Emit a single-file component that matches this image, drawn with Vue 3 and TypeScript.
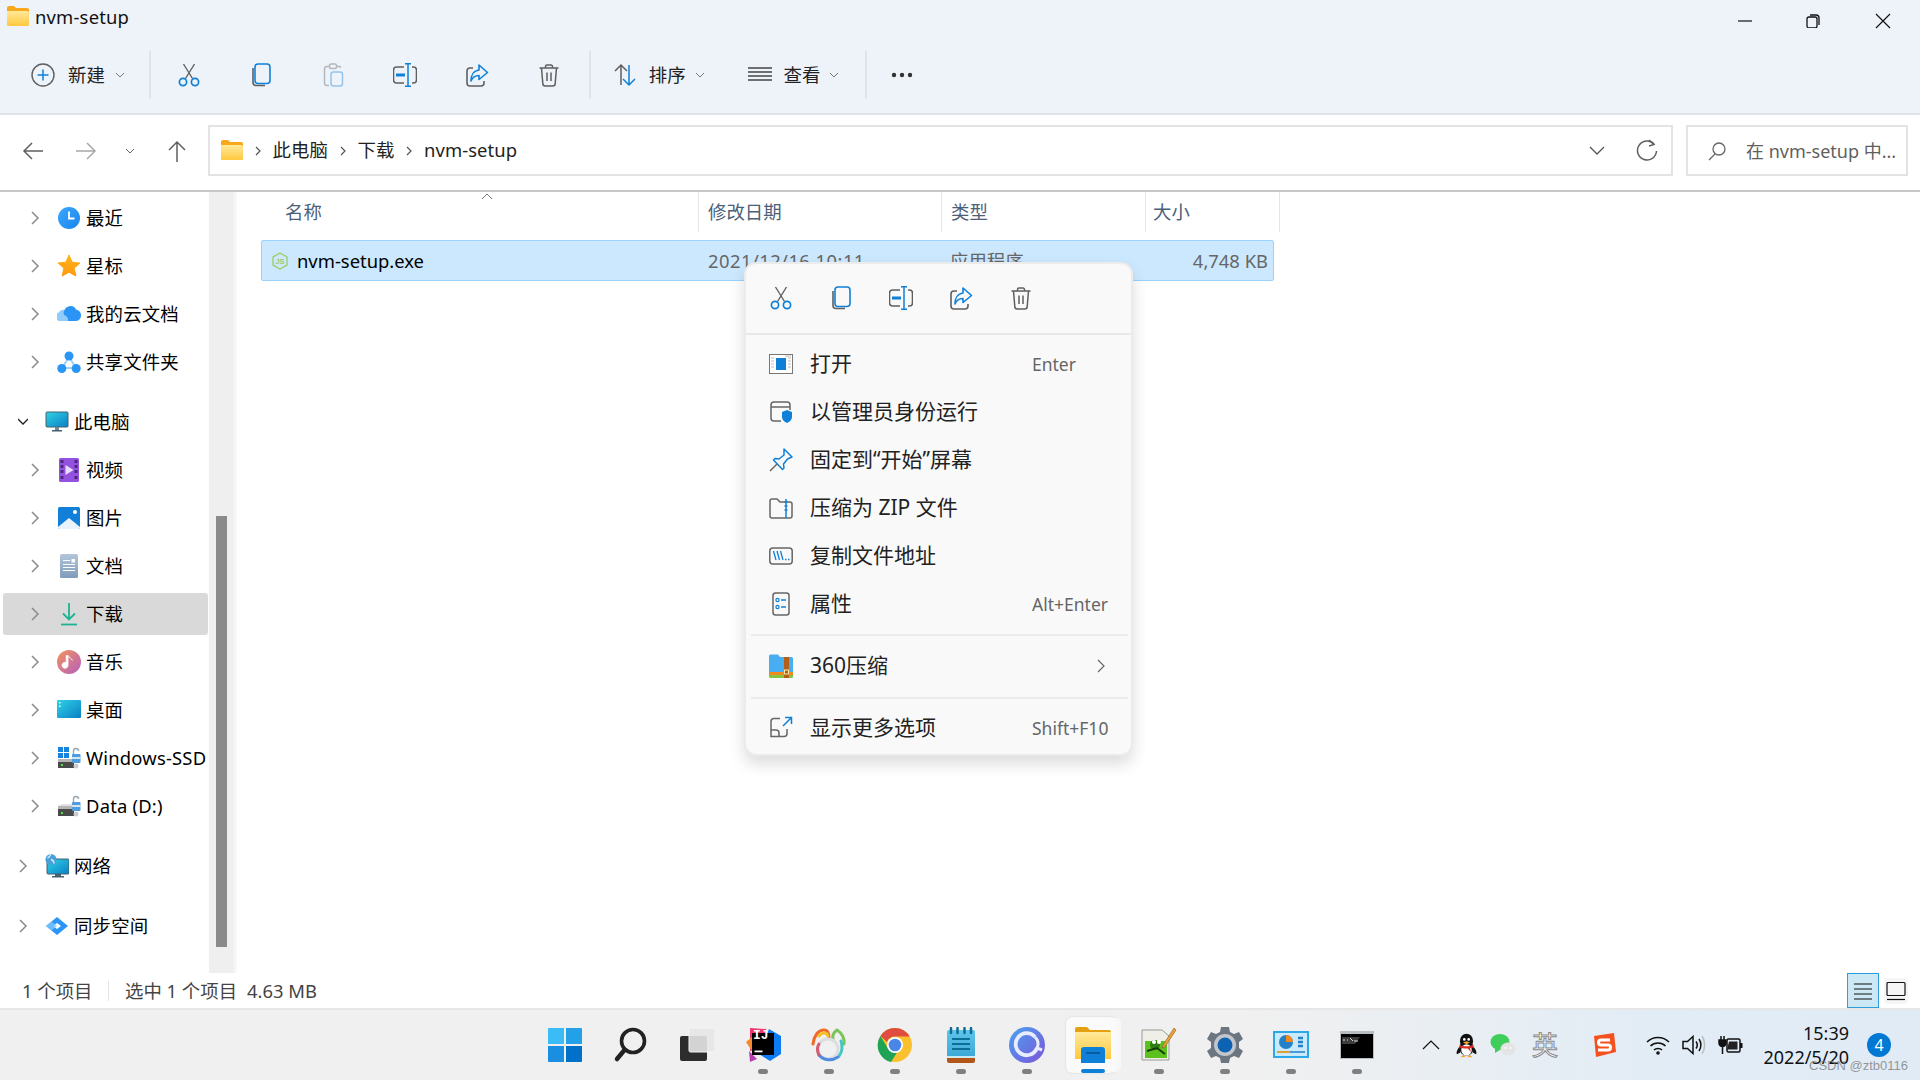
<template>
  <div class="page">
    <!-- shared icons -->
    <svg class="defs" width="0" height="0">
      <defs>
        <linearGradient id="g-folder" x1="0" y1="0" x2="0" y2="1"><stop offset="0" stop-color="#ffe99a" /><stop offset="1" stop-color="#ffc83d" /></linearGradient>
        <linearGradient id="g-blue" x1="0" y1="0" x2="1" y2="1"><stop offset="0" stop-color="#39a8ff" /><stop offset="1" stop-color="#1a84ee" /></linearGradient>
        <linearGradient id="g-star" x1="0" y1="0" x2="0" y2="1"><stop offset="0" stop-color="#ffb31a" /><stop offset="1" stop-color="#ff9a0e" /></linearGradient>
        <linearGradient id="g-screen" x1="0" y1="0" x2="1" y2="1"><stop offset="0" stop-color="#2fd3e6" /><stop offset="1" stop-color="#0b7fc4" /></linearGradient>
        <linearGradient id="g-music" x1="0" y1="0" x2="1" y2="1"><stop offset="0" stop-color="#f4935a" /><stop offset="1" stop-color="#b45fc0" /></linearGradient>
        <linearGradient id="g-doc" x1="0" y1="0" x2="0" y2="1"><stop offset="0" stop-color="#b4c6da" /><stop offset="1" stop-color="#7f9cba" /></linearGradient>
        <linearGradient id="g-purple" x1="0" y1="0" x2="1" y2="1"><stop offset="0" stop-color="#4aa2f0" /><stop offset="1" stop-color="#7c55d8" /></linearGradient>
        <linearGradient id="g-tray" x1="0" y1="0" x2="0" y2="1"><stop offset="0" stop-color="#5fc5ea" /><stop offset="1" stop-color="#3aa6d6" /></linearGradient>
      </defs>

      <symbol id="i-folder" viewBox="0 0 22 20">
        <path d="M0 2a2 2 0 0 1 2-2h5l2 2h11a2 2 0 0 1 2 2v14a2 2 0 0 1-2 2H2a2 2 0 0 1-2-2z" fill="#f7a81b" />
        <path d="M0 5h20a2 2 0 0 1 2 2v11a2 2 0 0 1-2 2H2a2 2 0 0 1-2-2z" fill="url(#g-folder)" />
      </symbol>

      <!-- command icons -->
      <symbol id="i-cut" viewBox="0 0 24 24">
        <path d="M6.500 1l9 14.500M17.500 1l-9 14.500" fill="none" stroke="#5f5f5f" stroke-width="1.400" />
        <circle cx="6" cy="19" r="3.600" fill="none" stroke="#0f80d8" stroke-width="1.700" />
        <circle cx="18" cy="19" r="3.600" fill="none" stroke="#0f80d8" stroke-width="1.700" />
      </symbol>
      <symbol id="i-copy" viewBox="0 0 24 24">
        <path d="M4 5v14.500a3 3 0 0 0 3 3h9" fill="none" stroke="#5f5f5f" stroke-width="1.600" />
        <rect x="6" y="1" width="15" height="19.500" rx="3" fill="none" stroke="#0f80d8" stroke-width="1.600" />
      </symbol>
      <symbol id="i-paste" viewBox="0 0 24 24">
        <g opacity=".4">
          <path d="M9 3.500H6a2.500 2.500 0 0 0-2.500 2.500v14a2.500 2.500 0 0 0 2.500 2.500h2M15 3.500h3a2.500 2.500 0 0 1 2 1" fill="none" stroke="#5f5f5f" stroke-width="1.500" />
          <rect x="8.500" y="1" width="7" height="4.500" rx="1.500" fill="none" stroke="#5f5f5f" stroke-width="1.500" />
          <rect x="10" y="9" width="11.500" height="14" rx="2.500" fill="none" stroke="#0f80d8" stroke-width="1.500" />
        </g>
      </symbol>
      <symbol id="i-rename" viewBox="0 0 24 24">
        <path d="M11 4H3.500a3 3 0 0 0-3 3v10a3 3 0 0 0 3 3H11M19 4h1.500a3 3 0 0 1 3 3v10a3 3 0 0 1-3 3H19" fill="none" stroke="#5f5f5f" stroke-width="1.600" />
        <path d="M15 .5v23M12 .8h6M12 23.200h6" fill="none" stroke="#0f80d8" stroke-width="1.500" />
        <rect x="3" y="10.500" width="9" height="3" fill="#0f80d8" />
      </symbol>
      <symbol id="i-share" viewBox="0 0 24 24">
        <path d="M8 5H5a3 3 0 0 0-3 3v12a3 3 0 0 0 3 3h11a3 3 0 0 0 3-3v-2" fill="none" stroke="#5f5f5f" stroke-width="1.600" />
        <path d="M14 2l8.500 7.500-8.500 7v-4c-3.800 0-6.500 1.800-8 5.500 0-6 3-10.500 8-11z" fill="none" stroke="#0f80d8" stroke-width="1.600" stroke-linejoin="round" />
      </symbol>
      <symbol id="i-delete" viewBox="0 0 24 24">
        <path d="M2.500 5h19M8.500 5V3.500A1.500 1.500 0 0 1 10 2h4a1.500 1.500 0 0 1 1.500 1.500V5M4.500 5l1.300 15.500a2.500 2.500 0 0 0 2.500 2.500h7.400a2.500 2.500 0 0 0 2.500-2.500L19.500 5M10 9.500v8.500M14 9.500v8.500" fill="none" stroke="#5f5f5f" stroke-width="1.500" />
      </symbol>

      <!-- sidebar icons -->
      <symbol id="s-recent" viewBox="0 0 24 24">
        <circle cx="12" cy="12" r="11" fill="url(#g-blue)" />
        <path d="M12 5.500V12.500H17.500" fill="none" stroke="#fff" stroke-width="1.800" />
      </symbol>
      <symbol id="s-star" viewBox="0 0 24 24">
        <path d="M12 1l3.200 7.200 7.800.8-5.800 5.200 1.600 7.800L12 18.200 5.200 22l1.600-7.800L1 9l7.800-.8z" fill="url(#g-star)" stroke="url(#g-star)" stroke-width="1" stroke-linejoin="round" />
      </symbol>
      <symbol id="s-cloud" viewBox="0 0 24 24">
        <path d="M2 19a4.500 4.500 0 0 1-.5-8.500A6 6 0 0 1 9 8.500l5 10.500z" fill="#8fcbfb" />
        <path d="M7 13a7 7 0 0 1 7-9 6 6 0 0 1 5 3.500A5.800 5.800 0 0 1 24 13.500 5.500 5.500 0 0 1 18.500 19H11a5 5 0 0 0-4-6z" fill="#2b95f5" />
      </symbol>
      <symbol id="s-shared" viewBox="0 0 24 24">
        <path d="M12 7L5 18M12 7l7 11M5 18h14" stroke="#9dd0fb" stroke-width="2" fill="none" />
        <circle cx="12" cy="6" r="4.500" fill="#2b95f5" />
        <circle cx="4.800" cy="18.500" r="4.500" fill="#2b95f5" />
        <circle cx="19.200" cy="18.500" r="4.500" fill="#2b95f5" />
      </symbol>
      <symbol id="s-pc" viewBox="0 0 24 24">
        <rect x="1" y="2" width="22" height="15" rx="1" fill="url(#g-screen)" stroke="#45606e" stroke-width="1" />
        <rect x="10" y="17" width="4" height="3" fill="#6f8796" />
        <rect x="7" y="20" width="10" height="1.500" fill="#45606e" />
      </symbol>
      <symbol id="s-video" viewBox="0 0 24 24">
        <rect x="2" y="0" width="20" height="24" rx="1.500" fill="#9551e0" />
        <g fill="#4a2a78"><rect x="3.500" y="2" width="3" height="3" /><rect x="3.500" y="7" width="3" height="3" /><rect x="3.500" y="12" width="3" height="3" /><rect x="3.500" y="18" width="3" height="3" /><rect x="17.500" y="2" width="3" height="3" /><rect x="17.500" y="7" width="3" height="3" /><rect x="17.500" y="12" width="3" height="3" /><rect x="17.500" y="18" width="3" height="3" /></g>
        <path d="M8.500 7l8 5-8 5z" fill="#eadcff" />
      </symbol>
      <symbol id="s-picture" viewBox="0 0 24 24">
        <rect x="1" y="1" width="22" height="22" rx="1.500" fill="#1280d8" />
        <circle cx="18" cy="6" r="2" fill="#fff" />
        <path d="M1 21l11-9 11 9v.5a1.500 1.500 0 0 1-1.500 1.500h-19A1.500 1.500 0 0 1 1 21.500z" fill="#e9f3fb" />
      </symbol>
      <symbol id="s-doc" viewBox="0 0 24 24">
        <rect x="3" y="0" width="18" height="24" rx="1.500" fill="url(#g-doc)" />
        <path d="M6 6.500h7M6 10.500h12M6 13.500h12M6 16.500h12" stroke="#fff" stroke-width="1" />
        <rect x="14.500" y="5" width="3.500" height="3.500" fill="#fff" />
      </symbol>
      <symbol id="s-download" viewBox="0 0 24 24">
        <path d="M12 1v16M6 11.500l6 6 6-6" fill="none" stroke="#1cb394" stroke-width="1.800" />
        <path d="M4 22.500h16" stroke="#1cb394" stroke-width="1.800" />
      </symbol>
      <symbol id="s-music" viewBox="0 0 24 24">
        <circle cx="12" cy="12" r="12" fill="url(#g-music)" />
        <path d="M11 5.500v9.800a3 3 0 1 1-1.800-2.700V5.500zM11 5.500c1 2.500 3.500 2.500 4.500 5" fill="#fff" stroke="#fff" stroke-width=".8" />
      </symbol>
      <symbol id="s-desktop" viewBox="0 0 24 24">
        <rect x="0" y="2" width="24" height="18" rx="1" fill="url(#g-screen)" />
        <rect x="2" y="4" width="1.500" height="1.500" fill="#fff" />
        <rect x="2" y="7.500" width="1.500" height="1.500" fill="#fff" />
      </symbol>
      <symbol id="s-ssd" viewBox="0 0 24 24">
        <g fill="#1884dc"><rect x="1" y="1" width="5" height="5" /><rect x="7" y="1" width="5" height="5" /><rect x="1" y="7" width="5" height="5" /><rect x="7" y="7" width="5" height="5" /></g>
        <path d="M1 14h14l2 0v8H1z" fill="#4a4a4a" />
        <rect x="1" y="13" width="16" height="3" fill="#b5b5b5" />
        <rect x="4" y="18" width="2" height="2" fill="#55e04a" />
        <path d="M16.500 8V5a2.500 2.500 0 0 1 5 0" fill="none" stroke="#9aa5ad" stroke-width="1.400" />
        <rect x="15" y="8" width="8.500" height="9" rx="1" fill="#4d9ee0" />
        <rect x="15" y="11" width="8.500" height="2" fill="#d7e4ee" />
        <circle cx="19" cy="20" r="2.500" fill="#c8ced3" />
      </symbol>
      <symbol id="s-data" viewBox="0 0 24 24">
        <path d="M5 10h12v2H1z" fill="#e2e2e2" />
        <path d="M1 13h16v9H1z" fill="#4a4a4a" />
        <rect x="1" y="12" width="16" height="3" fill="#b5b5b5" />
        <rect x="4" y="18" width="2" height="2" fill="#55e04a" />
        <path d="M16.500 8V5a2.500 2.500 0 0 1 5 0" fill="none" stroke="#9aa5ad" stroke-width="1.400" />
        <rect x="15" y="8" width="8.500" height="9" rx="1" fill="#4d9ee0" />
        <rect x="15" y="11" width="8.500" height="2" fill="#d7e4ee" />
        <circle cx="19" cy="20" r="2.500" fill="#c8ced3" />
      </symbol>
      <symbol id="s-network" viewBox="0 0 24 24">
        <rect x="2" y="5" width="22" height="15" rx="1" fill="url(#g-screen)" stroke="#45606e" />
        <path d="M10 20h6v2h3v1.500H7V22h3z" fill="#45606e" />
        <circle cx="6" cy="5.500" r="5.500" fill="#4aa0d8" />
        <path d="M2.500 4c2-1 3-3 3-4M6 5.500c2 .5 3 2 3 4" stroke="#cfe8f8" stroke-width="1.400" fill="none" />
      </symbol>
      <symbol id="s-sync" viewBox="0 0 24 24">
        <path d="M12 3l11 9-11 9-11-9zM12 9l-4 3 4 3 4-3z" fill="#2b95f5" fill-rule="evenodd" />
        <path d="M1 12l5.500-4.500L12 12l-5.500 4.500z" fill="#7cc6fb" opacity=".8" />
      </symbol>

      <!-- menu icons -->
      <symbol id="m-open" viewBox="0 0 24 24">
        <rect x=".5" y="2.500" width="23" height="19" fill="#fff" stroke="#777" />
        <rect x="7" y="6" width="10" height="12" fill="#0f80d8" />
        <path d="M2 6h3M2 9h3M2 12h3M2 15h3M19 6h3M19 9h3M19 12h3M19 15h3M16 4h6" stroke="#aaa" stroke-width=".8" />
      </symbol>
      <symbol id="m-admin" viewBox="0 0 24 24">
        <path d="M12 21H5a3 3 0 0 1-3-3V5a3 3 0 0 1 3-3h13a3 3 0 0 1 3 3v5M2 7h19" fill="none" stroke="#666" stroke-width="1.500" />
        <path d="M18 10l5 2v5c0 3-2.500 5-5 6-2.500-1-5-3-5-6v-5z" fill="#0f80d8" />
      </symbol>
      <symbol id="m-pin" viewBox="0 0 24 24">
        <path d="M15 1l8 8-4.500 2-4 5 .5 4-1.500 1.500L4.500 12 6 10.500l4 .5 5-4z" fill="none" stroke="#0f80d8" stroke-width="1.500" stroke-linejoin="round" />
        <path d="M8 16l-7 7" stroke="#666" stroke-width="1.500" />
      </symbol>
      <symbol id="m-zip" viewBox="0 0 24 24">
        <path d="M1 5a2 2 0 0 1 2-2h5l3 3h10a2 2 0 0 1 2 2v12a2 2 0 0 1-2 2H3a2 2 0 0 1-2-2z" fill="none" stroke="#666" stroke-width="1.500" />
        <path d="M17 3v19M15.500 6h3M15.500 10h3M15.500 14h3" stroke="#0f80d8" stroke-width="1.500" />
      </symbol>
      <symbol id="m-path" viewBox="0 0 24 24">
        <rect x=".8" y="4" width="22.400" height="16" rx="3" fill="none" stroke="#666" stroke-width="1.500" />
        <path d="M4.500 7l2.500 9M8 7l2.500 9M11.500 7l2.500 9" stroke="#0f80d8" stroke-width="1.300" />
        <path d="M16 15.500h1.500M19 15.500h1.500" stroke="#0f80d8" stroke-width="1.500" />
      </symbol>
      <symbol id="m-props" viewBox="0 0 24 24">
        <rect x="4" y="1" width="16" height="22" rx="2.500" fill="none" stroke="#666" stroke-width="1.500" />
        <circle cx="8.500" cy="8" r="1.600" fill="none" stroke="#0f80d8" stroke-width="1.200" />
        <circle cx="8.500" cy="15" r="1.600" fill="none" stroke="#0f80d8" stroke-width="1.200" />
        <path d="M12 8h5M12 15h5" stroke="#0f80d8" stroke-width="1.300" />
      </symbol>
      <symbol id="m-360" viewBox="0 0 24 24">
        <path d="M0 2a1.500 1.500 0 0 1 1.500-1.500H9L11 3h11.500A1.500 1.500 0 0 1 24 4.500V18H0z" fill="#48aef2" />
        <rect y="18" width="24" height="3" fill="#f08a1d" />
        <path d="M0 21h24v1.500a1.500 1.500 0 0 1-1.500 1.500h-21A1.500 1.500 0 0 1 0 22.500z" fill="#84c440" />
        <rect x="15" y="3" width="5" height="21" fill="#b45f17" />
        <rect x="15.500" y="16" width="4" height="4" fill="none" stroke="#ffe7a6" stroke-width="1" />
      </symbol>
      <symbol id="m-more" viewBox="0 0 24 24">
        <path d="M11 2.500H5a3 3 0 0 0-3 3v15h13a3 3 0 0 0 3-3V13M2 14h5a3 3 0 0 1 3 3v3.500" fill="none" stroke="#666" stroke-width="1.500" />
        <path d="M14 10l8.500-8.500M16 1.500h6.500V8" fill="none" stroke="#0f80d8" stroke-width="1.500" />
      </symbol>

      <!-- taskbar icons -->
      <symbol id="t-start" viewBox="0 0 36 36">
        <path d="M1 2a1 1 0 0 1 1-1h15v16H1z" fill="#3cbcf6" />
        <path d="M19 1h15a1 1 0 0 1 1 1v15H19z" fill="#22a0e8" />
        <path d="M1 19h16v16H2a1 1 0 0 1-1-1z" fill="#1a8ee0" />
        <path d="M19 19h16v15a1 1 0 0 1-1 1H19z" fill="#0070c8" />
      </symbol>
      <symbol id="t-search" viewBox="0 0 36 36">
        <circle cx="20" cy="14" r="11.500" fill="none" stroke="#222" stroke-width="3.600" />
        <path d="M11.500 23L4 32" stroke="#222" stroke-width="4.500" stroke-linecap="round" />
      </symbol>
      <symbol id="t-view" viewBox="0 0 36 36">
        <rect x="1" y="9" width="27" height="25" rx="2" fill="#2d2d2d" />
        <rect x="10" y="1" width="26" height="24" rx="1.500" fill="#e6e6e6" fill-opacity=".9" stroke="#f6f6f6" />
      </symbol>
      <symbol id="t-idea" viewBox="0 0 36 36">
        <path d="M5 1l16 1 4 20-20 2z" fill="#f0356f" />
        <path d="M24 2l12 7v18l-11 7-11-7z" fill="#0d7cf2" />
        <path d="M1 15l6-5v14z" fill="#f7882b" />
        <path d="M4 24l8 8-7 3z" fill="#b53fb0" />
        <rect x="7" y="6" width="22" height="22" fill="#000" />
        <rect x="9.500" y="23.500" width="8" height="1.800" fill="#fff" />
      </symbol>
      <symbol id="t-navicat" viewBox="0 0 36 36">
        <g fill="none" stroke-width="3" stroke-linecap="round">
          <path d="M2 17C3 9 7 3 13 3c4 0 5 4 5 8" stroke="#ef6a2a" />
          <path d="M8 9c3-4 8-4 9 0" stroke="#f4c12a" />
          <path d="M22 13c-1-5 1-8 4-10 5 3 8 9 7 14" stroke="#7ac55a" />
          <path d="M30 14c2 6 1 11-2 15" stroke="#46c7c7" />
          <circle cx="17" cy="22" r="10" stroke="#ddd" />
          <path d="M8 28c5 6 13 6 19 2" stroke="#4f8be0" />
          <path d="M8 17c-2 3-2 7 0 11" stroke="#d25a6e" />
        </g>
      </symbol>
      <symbol id="t-chrome" viewBox="0 0 36 36">
        <circle cx="18" cy="18" r="17" fill="#fbc02d" />
        <path d="M18 1a17 17 0 0 1 14.700 8.500H18a8.500 8.500 0 0 0-8 5.500L3.500 9A17 17 0 0 1 18 1z" fill="#de4d3e" />
        <path d="M3.500 9L10 20c2 4 6 6 10 5.500L14 35A17 17 0 0 1 3.500 9z" fill="#1fa355" />
        <circle cx="18" cy="18" r="8" fill="#fff" />
        <circle cx="18" cy="18" r="6.300" fill="#4a86e8" />
      </symbol>
      <symbol id="t-notes" viewBox="0 0 36 36">
        <rect x="4" y="3" width="28" height="29" rx="2" fill="url(#g-tray)" />
        <path d="M4 29h28v2H4z" fill="#cfe9f3" />
        <path d="M4 31h28v3a2 2 0 0 1-2 2H6a2 2 0 0 1-2-2z" fill="#b3561a" />
        <path d="M8 1v5M14.500 1v5M21.500 1v5M28 1v5" stroke="#0c6e96" stroke-width="2.500" stroke-linecap="round" />
        <path d="M9 12h18M9 17h18M9 22h18" stroke="#0c6e96" stroke-width="1.800" />
      </symbol>
      <symbol id="t-circle" viewBox="0 0 36 36">
        <circle cx="18" cy="18" r="18" fill="url(#g-purple)" />
        <path d="M28 21a11 11 0 1 1-2-11" fill="none" stroke="#e8ecff" stroke-width="3.800" />
        <path d="M26 10c3 3 4 7 2 11l5 2" fill="none" stroke="#e8ecff" stroke-width="3" />
      </symbol>
      <symbol id="t-explorer" viewBox="0 0 36 36">
        <path d="M0 2a2 2 0 0 1 2-2h10l3 3h19a2 2 0 0 1 2 2v6H0z" fill="#e5a00f" />
        <path d="M0 5h36v27H0z" fill="url(#g-folder)" />
        <path d="M6 23a3 3 0 0 1 3-3h18a3 3 0 0 1 3 3v13H6z" fill="#0f80d8" />
        <path d="M11 26h14" stroke="#0a4f8f" stroke-width="1.500" />
      </symbol>
      <symbol id="t-npp" viewBox="0 0 36 36">
        <path d="M1 3h20l7 6v24H1z" fill="#efefe8" stroke="#999" />
        <rect x="4" y="14" width="22" height="17" fill="#5cc11f" />
        <circle cx="14" cy="18" r="5" fill="#2e7d14" />
        <circle cx="13" cy="15" r="2" fill="#fff" />
        <circle cx="18" cy="15" r="2" fill="#fff" />
        <path d="M6 24l10-3 8 6" stroke="#173c0a" stroke-width="2" fill="none" />
        <path d="M33 1l2 2-11 17-3 1 1-3z" fill="#e8a33a" stroke="#8a5b1c" stroke-width=".6" />
      </symbol>
      <symbol id="t-gear" viewBox="0 0 36 36">
        <path d="M14 0h8l1 5 4 2 5-2 4 7-4 3v6l4 3-4 7-5-2-4 2-1 5h-8l-1-5-4-2-5 2-4-7 4-3v-6L0 12l4-7 5 2 4-2z" fill="#6c7680" />
        <circle cx="18" cy="18" r="11" fill="#c2c6ca" />
        <circle cx="18" cy="18" r="7.500" fill="#0e62b4" />
      </symbol>
      <symbol id="t-panel" viewBox="0 0 36 36">
        <rect y="4" width="36" height="27" fill="#2aa8e8" />
        <rect x="2" y="6" width="32" height="23" fill="#c8eafa" />
        <circle cx="13" cy="15" r="7" fill="#2481c8" />
        <path d="M13 8a7 7 0 0 1 7 7h-7z" fill="#f08a1d" />
        <path d="M25 11h5M25 15h5M25 19h5" stroke="#2481c8" stroke-width="2.500" />
        <path d="M4 25h28" stroke="#2481c8" stroke-width="1.500" />
        <path d="M4 25h13" stroke="#f0a020" stroke-width="1.800" />
      </symbol>
      <symbol id="t-cmd" viewBox="0 0 36 36">
        <rect x="1" y="4" width="34" height="28" fill="#b9bdc2" />
        <rect x="2" y="7" width="32" height="24" fill="#000" />
        <path d="M3 10h18l-5 7H3z" fill="#3c3c3c" />
        <path d="M4 13h2M8 13h1M11 11l3 3M15 14h4" stroke="#ddd" stroke-width="1" />
      </symbol>

      <!-- tray icons -->
      <symbol id="y-qq" viewBox="0 0 24 28">
        <ellipse cx="12" cy="9" rx="7.500" ry="8.500" fill="#111" />
        <path d="M4 15c-3 4-4 7-3 9l4-2zM20 15c3 4 4 7 3 9l-4-2z" fill="#111" />
        <ellipse cx="12" cy="17" rx="8" ry="8.500" fill="#111" />
        <ellipse cx="12" cy="19" rx="6" ry="6.500" fill="#fff" />
        <circle cx="9.500" cy="7" r="1.500" fill="#fff" />
        <circle cx="14.500" cy="7" r="1.500" fill="#fff" />
        <path d="M8 10.500l4-1.500 4 1.500-4 2z" fill="#f5a623" />
        <path d="M4 13c5 2.500 11 2.500 16 0v3c-2 .8-3 1-4 1l1 4.500-3.500-4.200c-3 .4-6 .2-9.500-1.300z" fill="#e02b27" />
        <path d="M5 27.500h6l-2.500-3zM13 27.500h6l-3.500-3z" fill="#f5a623" />
      </symbol>
      <symbol id="y-wechat" viewBox="0 0 26 24">
        <ellipse cx="10" cy="9" rx="9.500" ry="8" fill="#3fce5c" />
        <path d="M5 15l0 5 5-3z" fill="#3fce5c" />
        <ellipse cx="18" cy="16" rx="7.500" ry="6.500" fill="#e4e4e4" />
        <circle cx="15.500" cy="15" r="1" fill="#fff" />
        <circle cx="20.500" cy="15" r="1" fill="#fff" />
      </symbol>
      <symbol id="y-sogou" viewBox="0 0 24 24">
        <path d="M2 3l20-3 2 19-20 5z" fill="#f4511e" />
        <path d="M18 7H9a2.500 2.500 0 0 0 0 5h7a2.500 2.500 0 0 1 0 5H6" fill="none" stroke="#fff" stroke-width="3" />
      </symbol>
      <symbol id="y-wifi" viewBox="0 0 24 20">
        <path d="M1 7c6-6 16-6 22 0M4.500 11c4-4 11-4 15 0M8 15c2-2 6-2 8 0" fill="none" stroke="#111" stroke-width="1.600" />
        <circle cx="12" cy="18" r="1.800" fill="#111" />
      </symbol>
      <symbol id="y-volume" viewBox="0 0 24 20">
        <path d="M1 6.500h4.500L11 1.500v17l-5.500-5H1z" fill="none" stroke="#111" stroke-width="1.500" />
        <path d="M14 6.500c1.500 2 1.500 5 0 7M17 4c2.500 3.500 2.500 8.500 0 12" fill="none" stroke="#111" stroke-width="1.500" />
        <path d="M20 1c3.500 5 3.500 13 0 18" fill="none" stroke="#bbb" stroke-width="1.400" />
      </symbol>
      <symbol id="y-battery" viewBox="0 0 26 20">
        <path d="M4 1v4M7 1v4M2 5h7v3a3.500 3.500 0 0 1-7 0zM5.500 11v8" stroke="#111" stroke-width="1.500" fill="#111" />
        <rect x="10" y="4" width="13" height="13" rx="1.500" fill="none" stroke="#111" stroke-width="1.500" />
        <path d="M12 6.500h8.500v8H10z" fill="#222" />
        <rect x="23" y="8" width="2.500" height="5" fill="#111" />
      </symbol>
    </svg>

    <header class="head">
      <div class="title-bar">
        <svg class="title-folder"><use href="#i-folder" /></svg>
        <span class="title-text latin">nvm-setup</span>
        <div class="win-btns">
          <svg width="14" height="14" viewBox="0 0 14 14"><path d="M0 7h14" stroke="#111" stroke-width="1.200" /></svg>
          <svg width="14" height="14" viewBox="0 0 14 14"><rect x="1" y="3" width="10" height="11" rx="2" fill="none" stroke="#111" stroke-width="1.300" /><path d="M4 1h6a3 3 0 0 1 3 3v7" fill="none" stroke="#111" stroke-width="1.300" /></svg>
          <svg width="16" height="16" viewBox="0 0 16 16"><path d="M1 1l14 14M15 1L1 15" stroke="#111" stroke-width="1.200" /></svg>
        </div>
      </div>
      <div class="toolbar">
        <div class="tb-label">
          <svg class="ico24" viewBox="0 0 24 24"><circle cx="12" cy="12" r="11" fill="none" stroke="#5f5f5f" stroke-width="1.400" /><path d="M12 6.500v11M6.500 12h11" stroke="#0f80d8" stroke-width="1.500" /></svg>
          <span>新建</span>
          <svg class="chev-down" viewBox="0 0 10 6"><path d="M1 1l4 4 4-4" /></svg>
        </div>
        <i class="tb-sep first" />
        <div class="tb-icons">
          <span v-for="id in commandIcons" :key="id" class="tb-slot"><svg class="ico24"><use :href="id" /></svg></span>
        </div>
        <i class="tb-sep second" />
        <div class="tb-label sort">
          <svg class="ico24" viewBox="0 0 24 24"><path d="M8 22V2M2 8l6-6 6 6" fill="none" stroke="#5f5f5f" stroke-width="1.500" /><path d="M16 2v20M10 16l6 6 6-6" fill="none" stroke="#0f80d8" stroke-width="1.500" /></svg>
          <span>排序</span>
          <svg class="chev-down" viewBox="0 0 10 6"><path d="M1 1l4 4 4-4" /></svg>
        </div>
        <div class="tb-label view">
          <svg class="ico24" viewBox="0 0 24 24"><path d="M0 5h24M0 9h24M0 13h24M0 17h24" stroke="#444" stroke-width="1.500" /></svg>
          <span>查看</span>
          <svg class="chev-down" viewBox="0 0 10 6"><path d="M1 1l4 4 4-4" /></svg>
        </div>
        <i class="tb-sep third" />
        <svg class="ico24 dots" viewBox="0 0 24 24"><circle cx="4" cy="12" r="2.200" fill="#333" /><circle cx="12" cy="12" r="2.200" fill="#333" /><circle cx="20" cy="12" r="2.200" fill="#333" /></svg>
      </div>
    </header>

    <div class="address-row">
      <svg class="ico24" viewBox="0 0 24 24"><path d="M22 12H3M11 4l-8 8 8 8" fill="none" stroke="#5f5f5f" stroke-width="1.500" /></svg>
      <svg class="ico24 forward" viewBox="0 0 24 24"><path d="M2 12h19M13 4l8 8-8 8" fill="none" stroke="#a8a8a8" stroke-width="1.500" /></svg>
      <svg class="recent-chev" viewBox="0 0 10 6"><path d="M1 1l4 4 4-4" /></svg>
      <svg class="ico24 up" viewBox="0 0 24 24"><path d="M12 23V3M4 11l8-8 8 8" fill="none" stroke="#5f5f5f" stroke-width="1.500" /></svg>
      <div class="address-box">
        <svg class="crumb-folder"><use href="#i-folder" /></svg>
        <template v-for="c in crumbs" :key="c">
          <span class="crumb-chev"><svg width="6" height="10" viewBox="0 0 6 10"><path d="M1 1l4 4-4 4" fill="none" stroke="#555" stroke-width="1.200" /></svg></span>
          <span class="crumb">{{ c }}</span>
        </template>
        <svg class="addr-down" viewBox="0 0 16 10"><path d="M1 1l7 7 7-7" fill="none" stroke="#555" stroke-width="1.300" /></svg>
        <svg class="ico24 refresh" viewBox="0 0 24 24"><path d="M19 5A9.500 9.500 0 1 0 21.500 12" fill="none" stroke="#5f5f5f" stroke-width="1.500" /><path d="M14 1l5 4.500-5 1.500" fill="none" stroke="#5f5f5f" stroke-width="1.500" /></svg>
      </div>
      <div class="search-box">
        <svg width="20" height="20" viewBox="0 0 20 20"><circle cx="12" cy="8" r="6" fill="none" stroke="#666" stroke-width="1.300" /><path d="M8 13L2 19" stroke="#666" stroke-width="1.300" /></svg>
        <span>在 nvm-setup 中...</span>
      </div>
    </div>

    <div class="body">
      <nav class="side">
        <div v-for="s in sideItems" :key="s.label" class="side-row" :class="[s.top ? 'top' : '', s.gap, s.active ? 'active' : '']">
          <svg class="side-chev" :class="{ open: s.open }" viewBox="0 0 10 16">
            <path v-if="s.open" d="M0 5l5 5 5-5" fill="none" stroke="#222" stroke-width="1.300" />
            <path v-else d="M2 2l6 6-6 6" fill="none" stroke="#8b8b8b" stroke-width="1.500" />
          </svg>
          <svg class="side-ico"><use :href="s.icon" /></svg>
          <span class="side-label">{{ s.label }}</span>
        </div>
      </nav>
      <div class="track"><div class="thumb" /></div>
      <div class="strip" />
      <main class="files">
        <div class="col-head">
          <span class="c-name">名称</span>
          <span class="c-date">修改日期</span>
          <span class="c-type">类型</span>
          <span class="c-size">大小</span>
          <svg class="sort-caret" width="12" height="6" viewBox="0 0 12 6"><path d="M1 6l5-5 5 5" fill="none" stroke="#777" stroke-width="1" /></svg>
        </div>
        <div class="file-row">
          <span class="f-name">
            <svg width="16" height="18" viewBox="0 0 16 18"><path d="M8 1l7 4v8l-7 4-7-4V5z" fill="none" stroke="#9ccc65" stroke-width="1.300" /><text x="8" y="12" text-anchor="middle" font-family="Liberation Sans, sans-serif" font-size="7.500" font-weight="700" fill="#9ccc65">JS</text></svg>
            <span>nvm-setup.exe</span>
          </span>
          <span class="f-date">2021/12/16 10:11</span>
          <span class="f-type">应用程序</span>
          <span class="f-size">4,748 KB</span>
        </div>
      </main>
    </div>

    <footer class="status">
      <span class="count">1 个项目</span>
      <i class="status-sep" />
      <span class="sel">选中 1 个项目</span>
      <span class="sel-size">4.63 MB</span>
      <div class="view-btns">
        <span class="vb on"><svg width="20" height="18" viewBox="0 0 20 18"><path d="M1 2h18M1 7h18M1 12h18M1 17h18" stroke="#111" stroke-width="1.200" /></svg></span>
        <span class="vb"><svg width="20" height="20" viewBox="0 0 20 20"><rect x="1" y="1.500" width="18" height="13" rx="1" fill="none" stroke="#111" stroke-width="1.200" /><path d="M1 18.500h18" stroke="#111" stroke-width="1.200" /></svg></span>
      </div>
    </footer>

    <div class="taskbar">
      <div class="apps">
        <div v-for="a in taskApps" :key="a.icon" class="app" :class="{ active: a.active }">
          <svg class="app-ico"><use :href="a.icon" /></svg>
          <span v-if="a.badge" class="app-text">{{ a.badge }}</span>
          <i v-if="a.dot" class="app-dot" />
          <i v-if="a.active" class="app-bar" />
        </div>
      </div>
      <div class="tray">
        <span><svg width="18" height="10" viewBox="0 0 18 10"><path d="M1 9l8-8 8 8" fill="none" stroke="#111" stroke-width="1.200" /></svg></span>
        <span><svg width="21" height="25" viewBox="0 0 24 28"><use href="#y-qq" /></svg></span>
        <span><svg width="26" height="24" viewBox="0 0 26 24"><use href="#y-wechat" /></svg></span>
        <span class="ime">英</span>
        <span><svg width="24" height="24" viewBox="0 0 24 24"><use href="#y-sogou" /></svg></span>
        <span><svg width="24" height="20" viewBox="0 0 24 20"><use href="#y-wifi" /></svg></span>
        <span><svg width="24" height="20" viewBox="0 0 24 20"><use href="#y-volume" /></svg></span>
        <span><svg width="26" height="20" viewBox="0 0 26 20"><use href="#y-battery" /></svg></span>
        <div class="clock"><div>15:39</div><div>2022/5/20</div></div>
        <span class="badge">4</span>
      </div>
      <span class="watermark">CSDN @ztb0116</span>
    </div>

    <!-- context menu -->
    <div class="menu">
      <div class="menu-top">
        <span v-for="id in menuCommands" :key="id" class="menu-cmd"><svg class="ico24"><use :href="id" /></svg></span>
      </div>
      <div class="menu-group">
        <div v-for="m in menuItems" :key="m.label" class="menu-row">
          <svg class="ico24"><use :href="m.icon" /></svg>
          <span class="menu-label">{{ m.label }}</span>
          <span class="menu-key">{{ m.key }}</span>
        </div>
      </div>
      <div class="menu-sep s1" />
      <div class="menu-row">
        <svg class="ico24"><use href="#m-360" /></svg>
        <span class="menu-label">360压缩</span>
        <svg class="menu-arrow" width="8" height="14" viewBox="0 0 8 14"><path d="M1 1l6 6-6 6" fill="none" stroke="#666" stroke-width="1.200" /></svg>
      </div>
      <div class="menu-sep s2" />
      <div class="menu-row">
        <svg class="ico24"><use href="#m-more" /></svg>
        <span class="menu-label">显示更多选项</span>
        <span class="menu-key">Shift+F10</span>
      </div>
    </div>
  </div>
</template>

<script setup lang="ts">
interface SideItem {
  label: string
  icon: string
  top?: boolean
  open?: boolean
  active?: boolean
  gap?: string
}

interface TaskApp {
  icon: string
  dot?: boolean
  active?: boolean
  badge?: string
}

const commandIcons = ['#i-cut', '#i-copy', '#i-paste', '#i-rename', '#i-share', '#i-delete']
const menuCommands = ['#i-cut', '#i-copy', '#i-rename', '#i-share', '#i-delete']
const crumbs = ['此电脑', '下载', 'nvm-setup']

const sideItems: SideItem[] = [
  { label: '最近', icon: '#s-recent' },
  { label: '星标', icon: '#s-star' },
  { label: '我的云文档', icon: '#s-cloud' },
  { label: '共享文件夹', icon: '#s-shared' },
  { label: '此电脑', icon: '#s-pc', top: true, open: true, gap: 'pc' },
  { label: '视频', icon: '#s-video' },
  { label: '图片', icon: '#s-picture' },
  { label: '文档', icon: '#s-doc' },
  { label: '下载', icon: '#s-download', active: true },
  { label: '音乐', icon: '#s-music' },
  { label: '桌面', icon: '#s-desktop' },
  { label: 'Windows-SSD', icon: '#s-ssd' },
  { label: 'Data (D:)', icon: '#s-data' },
  { label: '网络', icon: '#s-network', top: true, gap: 'far' },
  { label: '同步空间', icon: '#s-sync', top: true, gap: 'far' },
]

const menuItems = [
  { label: '打开', icon: '#m-open', key: 'Enter' },
  { label: '以管理员身份运行', icon: '#m-admin', key: '' },
  { label: '固定到“开始”屏幕', icon: '#m-pin', key: '' },
  { label: '压缩为 ZIP 文件', icon: '#m-zip', key: '' },
  { label: '复制文件地址', icon: '#m-path', key: '' },
  { label: '属性', icon: '#m-props', key: 'Alt+Enter' },
]

const taskApps: TaskApp[] = [
  { icon: '#t-start' },
  { icon: '#t-search' },
  { icon: '#t-view' },
  { icon: '#t-idea', dot: true, badge: 'IJ' },
  { icon: '#t-navicat', dot: true },
  { icon: '#t-chrome', dot: true },
  { icon: '#t-notes', dot: true },
  { icon: '#t-circle', dot: true },
  { icon: '#t-explorer', active: true },
  { icon: '#t-npp', dot: true },
  { icon: '#t-gear', dot: true },
  { icon: '#t-panel', dot: true },
  { icon: '#t-cmd', dot: true },
]
</script>

<style>
html, body { margin: 0; background: #fff; overflow: hidden; }
</style>

<style scoped>
.page {
  position: relative;
  width: 1920px;
  height: 1080px;
  overflow: hidden;
  display: flex;
  flex-direction: column;
  background: #fff;
  color: #111;
  font: 18.4px/24px "Noto Sans", "Noto Sans CJK SC", sans-serif;
}
.defs { position: absolute; }
.ico24 { width: 24px; height: 24px; flex: none; display: block; }
.latin { letter-spacing: .2px; }

/* title and command bar */
.head {
  height: 113px;
  background: #eef3fa;
  border-bottom: 2px solid #dde4ea;
  flex: none;
}
.title-bar { height: 36px; display: flex; align-items: center; padding-left: 7px; }
.title-folder { width: 22px; height: 20px; margin-top: -4px; }
.title-text { margin-left: 6px; margin-top: -3px; }
.win-btns { margin-left: auto; display: flex; align-items: center; margin-top: 6px; }
.win-btns svg:nth-child(1) { margin-right: 54px; }
.win-btns svg:nth-child(2) { margin-right: 55px; }
.win-btns svg:nth-child(3) { margin-right: 29px; }
.toolbar { height: 77px; display: flex; align-items: center; padding-left: 31px; }
.tb-label { display: flex; align-items: center; gap: 12px; color: #222; }
.tb-label:first-child { gap: 13px; }
.chev-down { width: 10px; height: 6px; margin-left: -3px; fill: none; stroke: #777; stroke-width: 1; }
.tb-sep { width: 2px; height: 48px; background: #e0e4e9; flex: none; }
.tb-sep.first { margin-left: 24px; }
.tb-sep.second { margin-left: 4px; }
.tb-sep.third { margin-left: 26px; }
.tb-icons { display: flex; margin-left: 2px; }
.tb-slot { width: 72px; display: flex; justify-content: center; }
.sort { margin-left: 22px; }
.view { margin-left: 43px; }
.dots { margin-left: 23px; }

/* address row */
.address-row {
  height: 71px;
  flex: none;
  display: flex;
  align-items: center;
  padding: 0 12px 4px 21px;
  border-bottom: 2px solid #c6c6c6;
  box-sizing: content-box;
}
.forward { margin-left: 29px; }
.recent-chev { width: 10px; height: 6px; margin-left: 27px; fill: none; stroke: #666; stroke-width: 1; }
.up { margin-left: 30px; }
.address-box {
  flex: 1;
  height: 51px;
  margin-left: 19px;
  box-sizing: border-box;
  border: 2px solid #e3e3e3;
  display: flex;
  align-items: center;
  padding: 0 12px 0 11px;
  color: #222;
}
.crumb-folder { width: 22px; height: 20px; margin-top: -1px; }
.crumb { margin-top: -1px; letter-spacing: .1px; }
.crumb-chev { width: 29.500px; display: flex; justify-content: center; }
.addr-down { width: 16px; height: 10px; margin-left: auto; }
.refresh { margin-left: 30px; }
.search-box {
  width: 222px;
  height: 51px;
  margin-left: 13px;
  box-sizing: border-box;
  border: 2px solid #e3e3e3;
  display: flex;
  align-items: center;
  gap: 19px;
  padding-left: 19px;
  color: #5f5f5f;
  font-size: 18px;
  white-space: nowrap;
  overflow: hidden;
}

/* body */
.body { flex: none; height: 781px; display: flex; }
.side { width: 209px; padding-top: 5px; flex: none; box-sizing: border-box; }
.side-row {
  height: 42px;
  margin: 0 1px 6px 3px;
  padding-left: 27px;
  border-radius: 3px;
  display: flex;
  align-items: center;
  white-space: nowrap;
  color: #000;
}
.side-row.top { padding-left: 15px; }
.side-row.pc { margin-top: 18px; margin-bottom: 6px; }
.side-row.far { margin-top: 18px; }
.side-row.active { background: #d9d9d9; }
.side-chev { width: 10px; height: 16px; flex: none; }
.side-ico { width: 24px; height: 24px; margin-left: 17px; flex: none; }
.side-label { margin-left: 5px; letter-spacing: .2px; }
.track { width: 25px; background: #efefef; flex: none; position: relative; }
.thumb { position: absolute; left: 7px; top: 324px; width: 11px; height: 431px; background: #8a8a8a; }
.strip { width: 3px; background: #f7f7f7; flex: none; }
.files { flex: 1; min-width: 0; }
.col-head {
  position: relative;
  width: 1043px;
  height: 40px;
  display: grid;
  grid-template-columns: 461px 243px 204px 135px;
  align-items: center;
  color: #4c607a;
}
.col-head span { height: 40px; line-height: 40px; box-sizing: border-box; padding-left: 9px; border-left: 1px solid #e5e5e5; }
.col-head .c-name { border-left: 0; padding-left: 48px; }
.col-head .c-size { padding-left: 7px; border-right: 1px solid #e5e5e5; }
.sort-caret { position: absolute; left: 244px; top: 1px; }
.file-row {
  width: 1013px;
  height: 41px;
  margin: 8px 0 0 24px;
  box-sizing: border-box;
  background: #cce8ff;
  border: 1px solid #99d1ff;
  border-radius: 2px;
  display: grid;
  grid-template-columns: 436px 243px 204px 1fr;
  align-items: center;
  color: #666;
}
.f-name { display: flex; align-items: center; gap: 9px; padding-left: 10px; color: #000; }
.f-date { padding-left: 10px; white-space: nowrap; letter-spacing: .45px; }
.f-type { padding-left: 9px; }
.f-size { text-align: right; padding-right: 5px; }

/* status bar */
.status {
  flex: none;
  height: 35px;
  display: flex;
  align-items: center;
  color: #444;
  padding-left: 22px;
}
.status-sep { width: 1px; height: 20px; background: #e3e3e3; margin: 0 16px; }
.count { width: 70px; white-space: nowrap; }
.sel-size { margin-left: 10px; }
.view-btns { margin-left: auto; display: flex; align-items: center; margin-right: 12px; gap: 5px; }
.vb { width: 24px; height: 26px; display: flex; align-items: center; justify-content: center; background: #f6f6f6; border-radius: 2px; }
.vb.on { width: 32px; height: 35px; box-sizing: border-box; background: #cde8f5; border: 1px solid #2d9fe0; border-radius: 0; }

/* taskbar */
.taskbar {
  flex: 1;
  position: relative;
  display: flex;
  box-sizing: border-box;
  padding-left: 532px;
  border-top: 2px solid #e6e6e6;
  background: linear-gradient(90deg, #f0f0f0 0%, #f0f0f0 65%, #e1ecf6 88%, #e0ebf6 100%);
}
.apps { display: flex; flex: none; }
.app { position: relative; width: 66px; height: 70px; display: flex; justify-content: center; padding-top: 17px; box-sizing: border-box; }
.app-ico { width: 36px; height: 36px; }
.app-text {
  position: absolute;
  left: 23px;
  top: 19px;
  font: 700 13px/14px "Liberation Mono", monospace;
  color: #fff;
}
.app-dot { position: absolute; left: 28px; bottom: 6px; width: 10px; height: 5px; border-radius: 3px; background: #808080; }
.app.active::before {
  content: "";
  position: absolute;
  left: 6px;
  top: 7px;
  width: 50px;
  height: 56px;
  border-radius: 6px;
  background: #fafafa;
  box-shadow: 6px 0 0 -1px #f7f7f7, 0 0 2px rgba(0, 0, 0, .15);
}
.app.active .app-ico { position: relative; }
.app-bar { position: absolute; left: 21px; top: 59px; width: 24px; height: 4px; border-radius: 2px; background: #0f80d8; }
.tray {
  margin-left: 24px;
  height: 70px;
  display: grid;
  grid-template-columns: 34px 36px 38px 46px 72px 36px 35px 38px 100px 42px;
  align-items: center;
  justify-items: center;
}
.tray > span { display: flex; }
.ime { font-size: 26px; color: #fff; -webkit-text-stroke: 1px #8a8a8a; }
.clock { justify-self: end; text-align: right; line-height: 24px; color: #111; font-size: 18px; }
.tray > .badge {
  width: 24px;
  height: 24px;
  border-radius: 50%;
  background: #0078d4;
  color: #fff;
  justify-content: center;
  font-size: 16px;
  margin-left: 18px;
}
.watermark {
  position: absolute;
  left: 1809px;
  top: 47px;
  font: 13px/18px "Liberation Sans", sans-serif;
  color: rgba(120, 120, 120, .75);
  white-space: nowrap;
}

/* context menu */
.menu {
  position: absolute;
  left: 744px;
  top: 262px;
  width: 389px;
  height: 494px;
  box-sizing: border-box;
  background: #f9f9f9;
  border: 2px solid #ebebeb;
  border-radius: 12px;
  box-shadow: 0 8px 16px rgba(0, 0, 0, .14);
  font-size: 21px;
  color: #222;
}
.menu-top {
  height: 71px;
  box-sizing: border-box;
  border-bottom: 2px solid #e8e8e8;
  display: flex;
  padding-left: 5px;
  align-items: center;
}
.menu-cmd { width: 60px; display: flex; justify-content: center; margin-top: -1px; }
.menu-group { padding-top: 5px; }
.menu-row { height: 48px; display: flex; align-items: center; padding-left: 23px; white-space: nowrap; }
.menu-label { margin-left: 17px; width: 222px; margin-top: -2px; }
.menu-key { font-size: 17.500px; color: #666; }
.menu-arrow { margin-left: 65px; }
.menu-sep { height: 2px; background: #ebebeb; margin: 0 3px 5px 5px; }
.menu-sep.s1 { margin-top: 6px; margin-bottom: 6px; }
.menu-sep.s2 { margin-top: 7px; }
</style>
